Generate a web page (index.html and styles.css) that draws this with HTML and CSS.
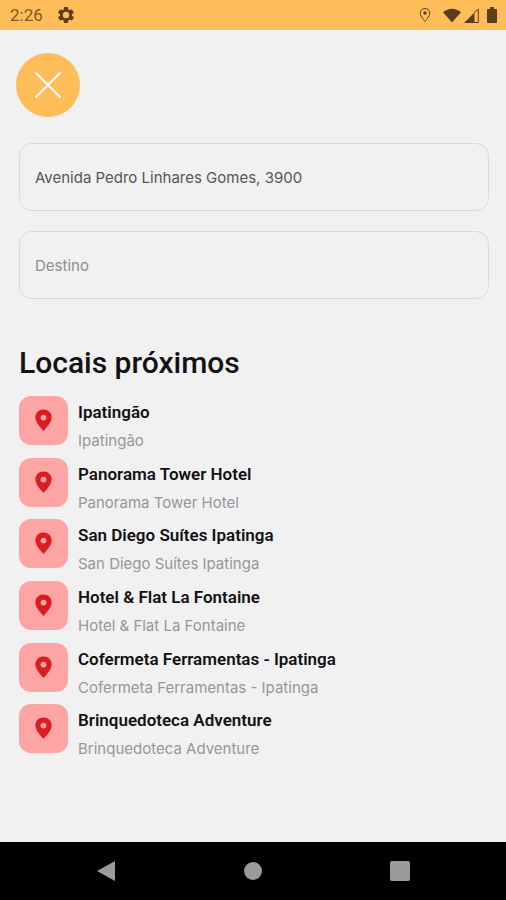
FILE: index.html
```html
<!DOCTYPE html>
<html lang="pt-BR">
<head>
<meta charset="utf-8">
<meta name="viewport" content="width=device-width, initial-scale=1">
<title>Locais próximos</title>
<link rel="stylesheet" href="styles.css">
</head>
<body>
<svg class="sprite" aria-hidden="true">
  <symbol id="pin" viewBox="0 0 24 24"><path fill-rule="evenodd" d="M12 1.500c-4.500 0-7.800 3.300-7.800 7.700C4.200 14.700 12 22 12 22s7.800-7.300 7.800-12.800c0-4.400-3.300-7.700-7.800-7.700zm0 10.500a2.800 2.800 0 1 1 0-5.600 2.800 2.800 0 0 1 0 5.600z"/></symbol>
</svg>
<header class="status">
  <time class="clock">2:26</time>
  <svg class="gear" viewBox="2 2 20 20" aria-hidden="true"><path fill-rule="evenodd" d="M19.400 13a7.500 7.500 0 0 0 0-2l2.100-1.600c.2-.2.300-.4.100-.7l-2-3.400c-.1-.2-.4-.3-.6-.2l-2.500 1c-.5-.4-1.100-.7-1.700-1l-.4-2.600c0-.3-.2-.5-.5-.5h-4c-.3 0-.5.200-.5.500L9.100 5.100c-.6.300-1.200.6-1.700 1l-2.500-1c-.2-.1-.5 0-.6.200l-2 3.400c-.1.300-.1.500.1.700L4.500 11a7.500 7.500 0 0 0 0 2l-2.100 1.600c-.2.200-.2.400-.1.700l2 3.400c.1.200.4.300.6.200l2.500-1c.5.400 1.100.7 1.700 1l.4 2.600c0 .3.200.5.500.5h4c.3 0 .5-.2.500-.5l.4-2.600c.6-.3 1.200-.6 1.700-1l2.500 1c.2.100.5 0 .6-.2l2-3.400c.1-.3.100-.5-.1-.7zM12 16a4 4 0 1 1 0-8 4 4 0 0 1 0 8z"/></svg>
  <div class="indicators" aria-hidden="true">
    <svg class="location" viewBox="0 0 12 16"><path class="outline" d="M6 1.500C3.300 1.500 1.300 3.500 1.300 6 1.300 9.300 6 14.500 6 14.500S10.700 9.300 10.700 6c0-2.500-2-4.500-4.700-4.500z"/><circle cx="6" cy="6" r="1.700"/></svg>
    <svg class="wifi" viewBox="0 0 18 15"><path d="M9 14.500 0 4.300C5-.6 13-.6 18 4.300z"/></svg>
    <svg class="signal" viewBox="0 0 15 15"><path d="M0 15 10.500 4.500V15z"/><path class="outline" d="M10 4.500 14.300 1.300v13.200H10"/></svg>
    <svg class="battery" viewBox="0 0 10 16"><path d="M3 0h4v2h2q1 0 1 1v12q0 1-1 1H1q-1 0-1-1V3q0-1 1-1h2z"/></svg>
  </div>
</header>
<main class="screen">
  <button class="close" type="button" aria-label="Fechar">
    <svg viewBox="0 0 26 26" aria-hidden="true"><path d="M1 1 25 25M25 1 1 25"/></svg>
  </button>
  <form class="route">
    <input class="field" type="text" aria-label="Origem" value="Avenida Pedro Linhares Gomes, 3900">
    <input class="field" type="text" aria-label="Destino" placeholder="Destino">
  </form>
  <h1 class="heading">Locais próximos</h1>
  <ul class="places">
    <li class="place"><span class="tile"><svg><use href="#pin"/></svg></span><div><h2 class="name">Ipatingão</h2><p class="detail">Ipatingão</p></div></li>
    <li class="place"><span class="tile"><svg><use href="#pin"/></svg></span><div><h2 class="name">Panorama Tower Hotel</h2><p class="detail">Panorama Tower Hotel</p></div></li>
    <li class="place"><span class="tile"><svg><use href="#pin"/></svg></span><div><h2 class="name">San Diego Suítes Ipatinga</h2><p class="detail">San Diego Suítes Ipatinga</p></div></li>
    <li class="place"><span class="tile"><svg><use href="#pin"/></svg></span><div><h2 class="name">Hotel &amp; Flat La Fontaine</h2><p class="detail">Hotel &amp; Flat La Fontaine</p></div></li>
    <li class="place"><span class="tile"><svg><use href="#pin"/></svg></span><div><h2 class="name">Cofermeta Ferramentas - Ipatinga</h2><p class="detail">Cofermeta Ferramentas - Ipatinga</p></div></li>
    <li class="place"><span class="tile"><svg><use href="#pin"/></svg></span><div><h2 class="name">Brinquedoteca Adventure</h2><p class="detail">Brinquedoteca Adventure</p></div></li>
  </ul>
</main>
<nav class="system">
  <button type="button" aria-label="Voltar"><svg viewBox="0 0 20 22"><path d="M1 11 19 1v20z"/></svg></button>
  <button type="button" aria-label="Início"><svg viewBox="0 0 20 22"><circle cx="10" cy="11" r="9"/></svg></button>
  <button type="button" aria-label="Recentes"><svg viewBox="0 0 20 22"><rect y="1" width="20" height="20" rx="2"/></svg></button>
</nav>
</body>
</html>
```
FILE: styles.css
```css
* { box-sizing: border-box; }

body {
  margin: 0;
  min-height: 100vh;
  display: flex;
  flex-direction: column;
  background: #f1f1f1;
  color: #121214;
  font-family: Roboto, sans-serif;
}

.sprite { display: none; }
svg { display: block; }
button { padding: 0; border: 0; cursor: pointer; }

.status {
  display: flex;
  align-items: center;
  height: 30px;
  padding: 0 9px 0 10px;
  background: #ffbd59;
  color: #7a5a28;
  fill: #59401a;
}
.clock { font-size: 17px; line-height: 32px; }
.gear { width: 16px; height: 16px; margin-left: 15px; }
.indicators { display: flex; align-items: center; margin-left: auto; }
.outline { fill: none; stroke: #59401a; stroke-width: 1; }
.location { width: 12px; height: 16px; margin-right: 12px; }
.wifi { width: 18px; height: 15px; margin-right: 3px; }
.signal { width: 15px; height: 15px; margin-right: 8px; }
.battery { width: 10px; height: 16px; }

.screen {
  flex: 1;
  display: flex;
  flex-direction: column;
  padding: 23px 17px 76px 19px;
}

.close {
  display: grid;
  place-items: center;
  width: 64px;
  height: 64px;
  margin-left: -3px;
  border-radius: 50%;
  background: #ffbd59;
}
.close svg { width: 26px; height: 26px; fill: none; stroke: #fff; stroke-width: 2; stroke-linecap: round; }

.route { display: grid; gap: 20px; margin-top: 26px; }
.field {
  width: 100%;
  height: 68px;
  padding: 0 15px;
  border: 1px solid #dadada;
  border-radius: 13px;
  background: transparent;
  color: #555558;
  font: 400 15px Inter, sans-serif;
}
.field::placeholder { color: #8d8d90; opacity: 1; }

.heading { margin: 45px 0 14px; font-size: 30px; line-height: 38px; font-weight: 500; }

.places {
  flex: 1;
  display: grid;
  grid-auto-rows: 1fr;
  margin: 0;
  padding: 0;
  list-style: none;
}
.place { display: flex; align-items: flex-start; gap: 10px; }
.tile {
  display: grid;
  place-items: center;
  width: 49px;
  height: 49px;
  border-radius: 12px;
  background: #fda4a4;
}
.tile svg { width: 25px; height: 25px; fill: #dc1c20; }
.name { margin: 3px 0 0; font-size: 17px; line-height: 26px; font-weight: 600; }
.detail { margin: 0; font: 400 15px/32px Inter, sans-serif; color: #96969b; }

.system {
  display: grid;
  grid-template-columns: repeat(3, 1fr);
  height: 58px;
  padding: 0 33px;
  background: #000;
}
.system button { display: grid; place-items: center; background: none; }
.system svg { width: 20px; height: 22px; fill: #9b9b9b; }
```
